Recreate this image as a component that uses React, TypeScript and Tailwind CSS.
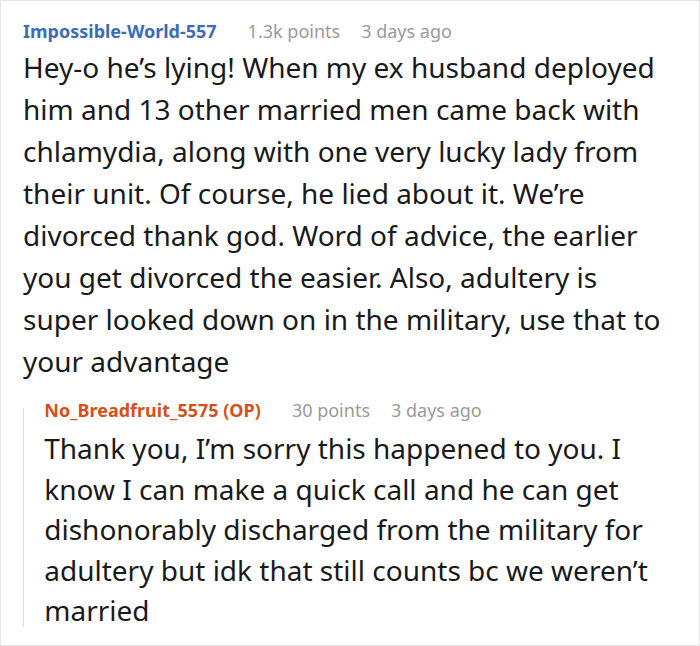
import React from 'react';

type CommentProps = {
  author: string;
  authorClass: string;
  points: string;
  time: string;
  text: string;
};

const CommentHeader = ({ author, authorClass, points, time }: Omit<CommentProps, 'text'>) => (
  <div className="flex items-baseline text-[18px] leading-[24px]">
    <span className={`font-bold ${authorClass}`}>{author}</span>
    <span className="ml-[31px] text-[#9a9a9a]">{points}</span>
    <span className="ml-[21px] text-[#9a9a9a]">{time}</span>
  </div>
);

const App = () => {
  return (
    <div
      className="w-[700px] h-[646px] bg-white border border-[#e6e6e6] overflow-hidden text-[#1a1a1a]"
      style={{ fontFamily: '"Noto Sans", "Open Sans", sans-serif' }}
    >
      <div className="pl-[22px] pr-[14px] pt-[18px]">
        <CommentHeader
          author="Impossible-World-557"
          authorClass="text-[#3a6db5]"
          points="1.3k points"
          time="3 days ago"
        />
        <p className="mt-[3px] mr-[16px] text-[28px] leading-[42px]">
          Hey-o he’s lying! When my ex husband deployed him and 13 other married men came back with
          chlamydia, along with one very lucky lady from their unit. Of course, he lied about it.
          We’re divorced thank god. Word of advice, the earlier you get divorced the easier. Also,
          adultery is super looked down on in the military, use that to your advantage
        </p>

        <div className="mt-[16px] flex">
          <div className="w-[1px] bg-[#dedede] mt-[10px] mb-[4px]" />
          <div className="pl-[21px]">
            <CommentHeader
              author="No_Breadfruit_5575 (OP)"
              authorClass="text-[#d5501d]"
              points="30 points"
              time="3 days ago"
            />
            <p className="mt-[6px] text-[28px] leading-[40.5px]">
              Thank you, I’m sorry this happened to you. I know I can make a quick call and he can
              get dishonorably discharged from the military for adultery but idk that still counts bc
              we weren’t married
            </p>
          </div>
        </div>
      </div>
    </div>
  );
};

export default App;
